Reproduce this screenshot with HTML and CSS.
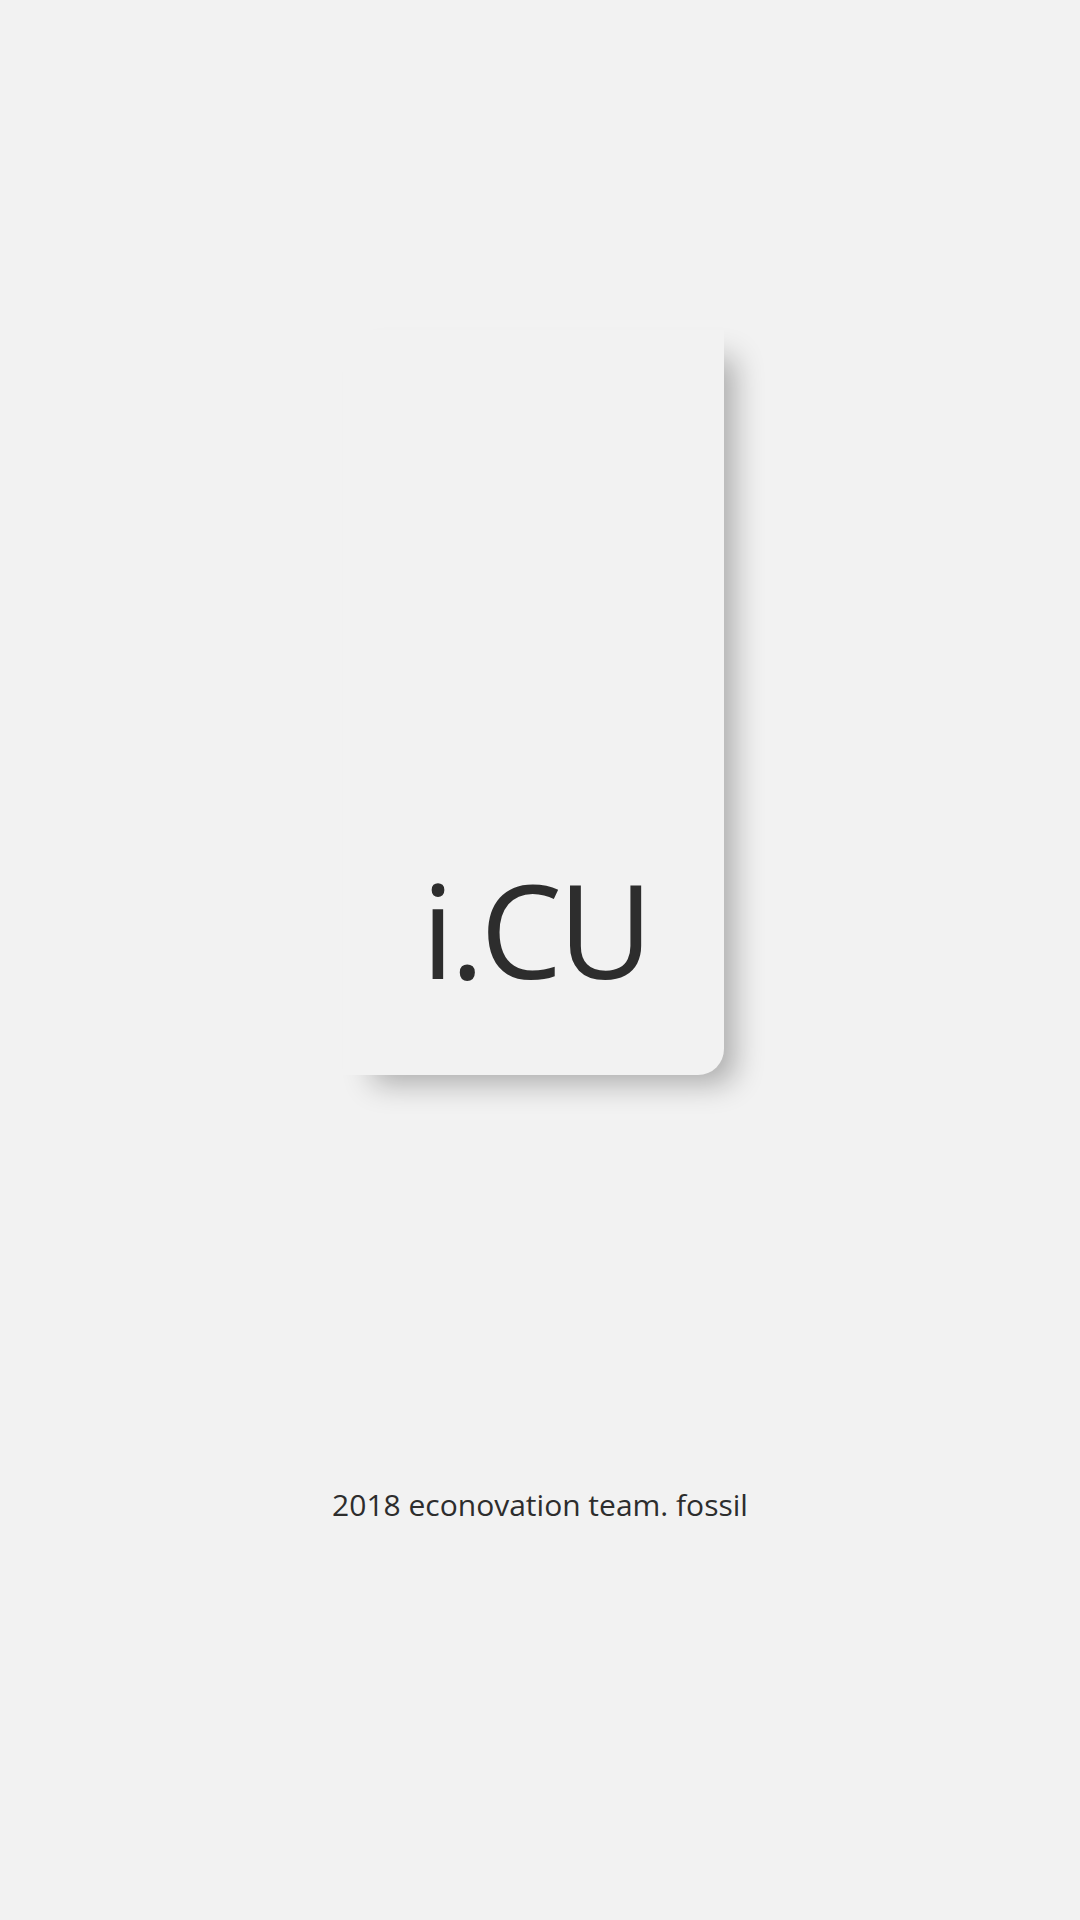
FILE: index.html
```html
<!DOCTYPE html>
<html>
<head>
<meta charset="utf-8">
<link rel="stylesheet" href="styles.css">
</head>
<body>
<main class="screen">
  <section class="card">
    <h1 class="logo">i.CU</h1>
  </section>
  <footer class="credit">2018 econovation team. fossil</footer>
</main>
</body>
</html>
```
FILE: styles.css
```css
html, body {
  margin: 0;
  padding: 0;
  background: #f2f2f2;
}
.screen {
  width: 1080px;
  height: 1920px;
  display: flex;
  flex-direction: column;
  align-items: flex-start;
  background: #f2f2f2;
  font-family: "Open Sans", "Noto Sans", sans-serif;
  color: #2d2d2d;
}
.card {
  margin-top: 330px;
  margin-left: 343px;
  width: 381px;
  height: 745px;
  box-sizing: border-box;
  background: #f2f2f2;
  border-radius: 0 0 26px 0;
  box-shadow: 20px 18px 30px -10px rgba(0, 0, 0, 0.3);
  display: flex;
  align-items: flex-end;
  justify-content: flex-end;
  padding: 0 75px 81px 0;
}
.logo {
  margin: 0;
  font-weight: 400;
  font-size: 130px;
  line-height: 1;
  letter-spacing: -4px;
}
.credit {
  align-self: center;
  margin-top: 410px;
  font-size: 30px;
  line-height: 40px;
}
```
